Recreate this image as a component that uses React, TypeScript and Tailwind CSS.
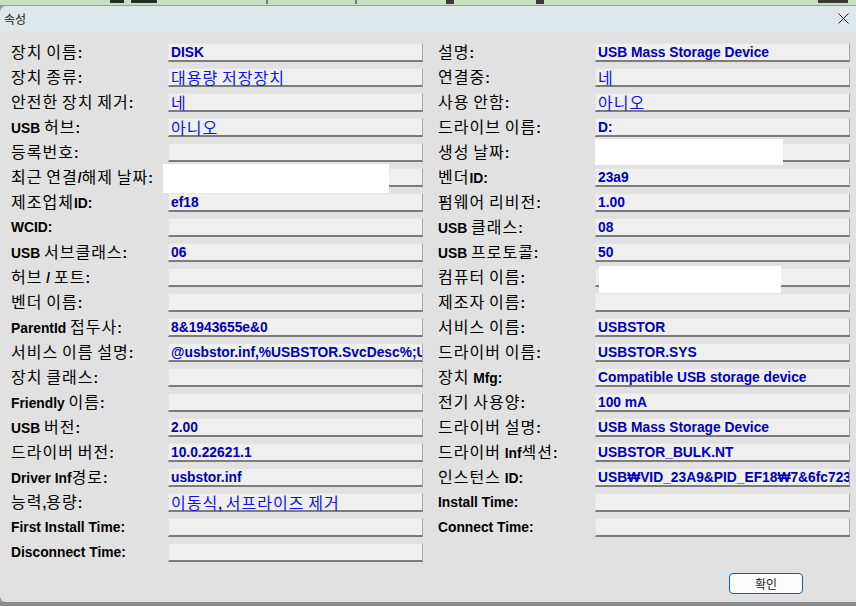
import React from 'react';

type Row = { label: string; value?: string; redact?: string; clip?: boolean };

const leftRows: Row[] = [
    { label: '장치 이름:', value: 'DISK' },
    { label: '장치 종류:', value: '대용량 저장장치' },
    { label: '안전한 장치 제거:', value: '네' },
    { label: 'USB 허브:', value: '아니오' },
    { label: '등록번호:' },
    { label: '최근 연결/해제 날짜:', redact: 'left-[-6px] top-[-5px] w-[226px] h-[29px]' },
    { label: '제조업체ID:', value: 'ef18' },
    { label: 'WCID:' },
    { label: 'USB 서브클래스:', value: '06' },
    { label: '허브 / 포트:' },
    { label: '벤더 이름:' },
    { label: 'ParentId 접두사:', value: '8&1943655e&0' },
    { label: '서비스 이름 설명:', value: '@usbstor.inf,%USBSTOR.SvcDesc%;U', clip: true },
    { label: '장치 클래스:' },
    { label: 'Friendly 이름:' },
    { label: 'USB 버전:', value: '2.00' },
    { label: '드라이버 버전:', value: '10.0.22621.1' },
    { label: 'Driver Inf경로:', value: 'usbstor.inf' },
    { label: '능력,용량:', value: '이동식, 서프라이즈 제거' },
    { label: 'First Install Time:' },
    { label: 'Disconnect Time:' },
];

const rightRows: Row[] = [
    { label: '설명:', value: 'USB Mass Storage Device' },
    { label: '연결중:', value: '네' },
    { label: '사용 안함:', value: '아니오' },
    { label: '드라이브 이름:', value: 'D:' },
    { label: '생성 날짜:', redact: 'left-[-1px] top-[-5px] w-[188px] h-[26px]' },
    { label: '벤더ID:', value: '23a9' },
    { label: '펌웨어 리비전:', value: '1.00' },
    { label: 'USB 클래스:', value: '08' },
    { label: 'USB 프로토콜:', value: '50' },
    { label: '컴퓨터 이름:', redact: 'left-[3px] top-[-3px] w-[182px] h-[29px]' },
    { label: '제조자 이름:' },
    { label: '서비스 이름:', value: 'USBSTOR' },
    { label: '드라이버 이름:', value: 'USBSTOR.SYS' },
    { label: '장치 Mfg:', value: 'Compatible USB storage device' },
    { label: '전기 사용양:', value: '100 mA' },
    { label: '드라이버 설명:', value: 'USB Mass Storage Device' },
    { label: '드라이버 Inf섹션:', value: 'USBSTOR_BULK.NT' },
    { label: '인스턴스 ID:', value: 'USB₩VID_23A9&PID_EF18₩7&6fc723&', clip: true },
    { label: 'Install Time:' },
    { label: 'Connect Time:' },
];

// hangul runs get the plain CJK face, everything else the bold latin face
function Mixed({ text, korean }: { text: string; korean: string }) {
    const parts = text.split(/([\u3131-\uD7A3]+)/).filter(Boolean);
    return (
        <>
            {parts.map((p, i) =>
                /[\u3131-\uD7A3]/.test(p) ? (
                    <span
                        key={i}
                        className={`font-['Noto_Sans_CJK_KR',sans-serif] text-[16px] leading-[17px] tracking-[1px] font-normal ${korean}`}
                    >
                        {p}
                    </span>
                ) : (
                    <span key={i} className="whitespace-pre font-['Liberation_Sans',Arial,sans-serif] text-[13.8px] leading-[17px] font-bold">
                        {p}
                    </span>
                )
            )}
        </>
    );
}

function Field({ row }: { row: Row }) {
    return (
        <div className="flex h-[19px] min-w-0 items-center">
            <div className="w-[157px] shrink-0 whitespace-nowrap font-['Liberation_Sans',sans-serif] text-[13.8px] leading-[19px] text-black">
                <Mixed text={row.label} korean="text-black" />
            </div>
            <div className="relative h-[19px] min-w-0 flex-1 border-t border-l border-t-[#e4e4e4] border-l-[#e4e4e4] border-r border-r-[#a8a8a8] border-b-2 border-b-[#7c7c7c] bg-[#efefef]">
                <div
                    className={`whitespace-nowrap pl-[2px] font-['Liberation_Sans',sans-serif] text-[13.8px] leading-[16px] text-[#0000b8] ${
                        row.clip ? 'overflow-x-clip' : ''
                    }`}
                >
                    {row.value && <Mixed text={row.value} korean="text-[#1010f0]" />}
                </div>
                {row.redact && <div className={`absolute bg-white ${row.redact}`} />}
            </div>
        </div>
    );
}

export default function App() {
    return (
        <div className="flex h-[606px] w-[856px] flex-col overflow-hidden bg-[#9a9a9a]">
            {/* window behind */}
            <div className="relative h-[6px] shrink-0 border-b border-b-[#8fa58f] bg-[#c6e0c4]">
                <div className="absolute left-[110px] top-0 h-[3px] w-[14px] bg-[#2a2a2a]" />
                <div className="absolute left-[131px] top-0 h-[3px] w-[26px] bg-[#2a2a2a]" />
                <div className="absolute left-[266px] top-0 h-[4px] w-[2px] bg-[#6a7a8a]" />
                <div className="absolute left-[355px] top-0 h-[4px] w-[2px] bg-[#6a7a8a]" />
                <div className="absolute left-[446px] top-0 h-[4px] w-[8px] bg-[#3a3a3a]" />
                <div className="absolute left-[536px] top-0 h-[4px] w-[8px] bg-[#3a3a3a]" />
                <div className="absolute left-[818px] top-0 h-[3px] w-[30px] bg-[#3a3a3a]" />
            </div>

            <div className="flex h-[25px] shrink-0 items-center justify-between rounded-tl-[6px] bg-[#dee7ea] pl-[4px] pr-[6px]">
                <span className="font-['Noto_Sans_CJK_KR',sans-serif] text-[12px] text-[#1a1a1a]">속성</span>
                <svg width="11" height="11" viewBox="0 0 11 11" className="mr-[1px]">
                    <path d="M0.5 0.5 L10.5 10.5 M10.5 0.5 L0.5 10.5" stroke="#222" strokeWidth="1" fill="none" />
                </svg>
            </div>

            <div className="flex flex-1 flex-col rounded-bl-[6px] bg-[#e1e1e1] pl-[11px] pr-[6px] pt-[12px]">
                <div className="grid grid-cols-2 gap-x-[15px]">
                    <div className="flex min-w-0 flex-col gap-[6px]">
                        {leftRows.map((r) => (
                            <Field key={r.label} row={r} />
                        ))}
                    </div>
                    <div className="flex min-w-0 flex-col gap-[6px]">
                        {rightRows.map((r) => (
                            <Field key={r.label} row={r} />
                        ))}
                    </div>
                </div>
                <div className="mt-[11px] flex justify-end pr-[47px]">
                    <button className="flex h-[21px] w-[74px] items-center justify-center rounded-[4px] border border-[#0067c0] bg-[#fdfdfd] font-['Noto_Sans_CJK_KR',sans-serif] text-[12px] text-[#1a1a1a]">
                        확인
                    </button>
                </div>
            </div>
            <div className="h-[4px] shrink-0 bg-[#8a8a8a]" />
        </div>
    );
}
